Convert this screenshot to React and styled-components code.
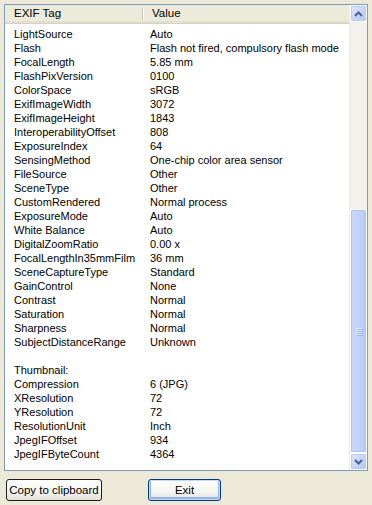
import React from "react"
import styled, { createGlobalStyle } from "styled-components"

const rows = [
  ["LightSource", "Auto"],
  ["Flash", "Flash not fired, compulsory flash mode"],
  ["FocalLength", "5.85 mm"],
  ["FlashPixVersion", "0100"],
  ["ColorSpace", "sRGB"],
  ["ExifImageWidth", "3072"],
  ["ExifImageHeight", "1843"],
  ["InteroperabilityOffset", "808"],
  ["ExposureIndex", "64"],
  ["SensingMethod", "One-chip color area sensor"],
  ["FileSource", "Other"],
  ["SceneType", "Other"],
  ["CustomRendered", "Normal process"],
  ["ExposureMode", "Auto"],
  ["White Balance", "Auto"],
  ["DigitalZoomRatio", "0.00 x"],
  ["FocalLengthIn35mmFilm", "36 mm"],
  ["SceneCaptureType", "Standard"],
  ["GainControl", "None"],
  ["Contrast", "Normal"],
  ["Saturation", "Normal"],
  ["Sharpness", "Normal"],
  ["SubjectDistanceRange", "Unknown"],
  ["", ""],
  ["Thumbnail:", ""],
  ["Compression", "6 (JPG)"],
  ["XResolution", "72"],
  ["YResolution", "72"],
  ["ResolutionUnit", "Inch"],
  ["JpegIFOffset", "934"],
  ["JpegIFByteCount", "4364"],
]

export default function App() {
  return (
    <>
      <GlobalStyle />
      <Window>
        <ListBox>
          <ListContent>
            <Header>
              <HeaderCell width={138}>EXIF Tag</HeaderCell>
              <HeaderCell>Value</HeaderCell>
            </Header>
            <Rows>
              {rows.map(([tag, value], i) => (
                <Row key={i}>
                  <TagCell>{tag}</TagCell>
                  <ValueCell>{value}</ValueCell>
                </Row>
              ))}
            </Rows>
          </ListContent>
          <ScrollBar>
            <ArrowButton>
              <svg width="9" height="6" viewBox="0 0 9 6">
                <path d="M1 5 L4.5 1.5 L8 5" fill="none" stroke="#4d6185" strokeWidth="2" />
              </svg>
            </ArrowButton>
            <Track>
              <Thumb>
                <Grip>
                  <span />
                  <span />
                  <span />
                  <span />
                </Grip>
              </Thumb>
            </Track>
            <ArrowButton>
              <svg width="9" height="6" viewBox="0 0 9 6">
                <path d="M1 1 L4.5 4.5 L8 1" fill="none" stroke="#4d6185" strokeWidth="2" />
              </svg>
            </ArrowButton>
          </ScrollBar>
        </ListBox>
        <ButtonBar>
          <Button width={96}>Copy to clipboard</Button>
          <Button width={73} primary>Exit</Button>
        </ButtonBar>
      </Window>
    </>
  )
}

const GlobalStyle = createGlobalStyle`
  html, body {
    margin: 0;
    padding: 0;
    background: #ece9d8;
  }
  body {
    font-family: "Liberation Sans", Arial, sans-serif;
    font-size: 11px;
    color: #000;
  }
`

const Window = styled.div`
  width: 372px;
  height: 505px;
  box-sizing: border-box;
  padding: 4px 4px 0 4px;
  display: flex;
  flex-direction: column;
`

const ListBox = styled.div`
  height: 467px;
  border: 1px solid #7f9db9;
  background: #fff;
  display: flex;
  overflow: hidden;
  box-sizing: border-box;
`

const ListContent = styled.div`
  flex: 1;
  overflow: hidden;
  display: flex;
  flex-direction: column;
`

const Header = styled.div`
  height: 18px;
  display: flex;
  background: #ebeadb;
  border-bottom: 1px solid #d6d2c2;
  box-shadow: inset 0 -2px 0 #e2dfd0;
  flex-shrink: 0;
`

const HeaderCell = styled.div`
  width: ${p => (p.width ? `${p.width - 9}px` : "auto")};
  flex: ${p => (p.width ? "none" : 1)};
  padding-left: 9px;
  line-height: 17px;
  font-size: 11.5px;
  position: relative;
  &:first-child::after {
    content: "";
    position: absolute;
    right: 0;
    top: 3px;
    bottom: 3px;
    width: 1px;
    background: #c7c5b2;
    box-shadow: 1px 0 0 #fff;
  }
`

const Rows = styled.div`
  padding-top: 3px;
`

const Row = styled.div`
  display: flex;
  height: 14px;
  line-height: 14px;
  white-space: nowrap;
`

const TagCell = styled.div`
  width: 136px;
  padding-left: 9px;
  flex: none;
`

const ValueCell = styled.div`
  padding-left: 0;
`

const ScrollBar = styled.div`
  width: 17px;
  flex: none;
  display: flex;
  flex-direction: column;
  background: #f3f1ec;
  border-left: 1px solid #eeede5;
`

const ArrowButton = styled.div`
  height: 17px;
  box-sizing: border-box;
  border: 1px solid #fff;
  border-radius: 2px;
  background: linear-gradient(135deg, #dde7fe 0%, #c1d3fb 60%, #b4c8f6 100%);
  box-shadow: inset 0 0 0 1px #b7cbf5;
  display: flex;
  align-items: center;
  justify-content: center;
  flex: none;
`

const Track = styled.div`
  flex: 1;
  display: flex;
  flex-direction: column;
  justify-content: flex-end;
`

const Thumb = styled.div`
  height: 244px;
  box-sizing: border-box;
  border: 1px solid #fff;
  border-radius: 2px;
  background: linear-gradient(90deg, #c9d8fc 0%, #c1d3fb 50%, #b6c9f7 100%);
  box-shadow: inset 0 0 0 1px #b0c4f2;
  display: flex;
  align-items: center;
  justify-content: center;
`

const Grip = styled.div`
  display: flex;
  flex-direction: column;
  gap: 1px;
  span {
    display: block;
    width: 6px;
    height: 1px;
    background: #eef3fe;
    box-shadow: 1px 1px 0 #8cb0f8;
  }
`

const ButtonBar = styled.div`
  display: flex;
  gap: 46px;
  padding: 8px 0 0 2px;
`

const Button = styled.div`
  width: ${p => p.width}px;
  height: 22px;
  box-sizing: border-box;
  border: 1px solid ${p => (p.primary ? "#003c74" : "#1c1c1c")};
  border-radius: 3px;
  background: linear-gradient(180deg, #ffffff 0%, #f4f4f0 60%, #e3e2da 100%);
  box-shadow: ${p =>
    p.primary ? "inset 0 0 0 1px #c6d8fb, inset 0 -1px 0 2px #98b4ec" : "none"};
  display: flex;
  align-items: center;
  justify-content: center;
  font-size: 11.5px;
`
